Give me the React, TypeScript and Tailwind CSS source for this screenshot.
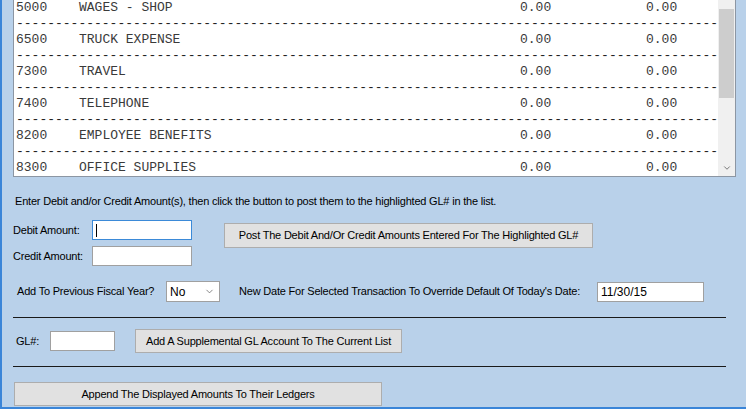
import { ChevronDown } from "lucide-react";

type GlRow = { code: string; name: string; debit: string; credit: string };

const ROWS: GlRow[] = [
  { code: "5000", name: "WAGES - SHOP", debit: "0.00", credit: "0.00" },
  { code: "6500", name: "TRUCK EXPENSE", debit: "0.00", credit: "0.00" },
  { code: "7300", name: "TRAVEL", debit: "0.00", credit: "0.00" },
  { code: "7400", name: "TELEPHONE", debit: "0.00", credit: "0.00" },
  { code: "8200", name: "EMPLOYEE BENEFITS", debit: "0.00", credit: "0.00" },
  { code: "8300", name: "OFFICE SUPPLIES", debit: "0.00", credit: "0.00" },
];

const DASHES = "-".repeat(90);

function WinButton({ children, className }: { children: React.ReactNode; className: string }) {
  return (
    <button
      type="button"
      className={
        "whitespace-nowrap border border-[#adadad] bg-[#e1e1e1] text-black leading-none " + className
      }
    >
      {children}
    </button>
  );
}

function WinInput({ value, focused, className }: { value?: string; focused?: boolean; className: string }) {
  return (
    <div
      className={
        "flex h-[20px] items-center border bg-white px-[3px] text-[12px] tracking-normal text-black " +
        (focused ? "border-[#3b8ad8] " : "border-[#a0a0a0] ") +
        className
      }
    >
      {focused ? <span className="h-[13px] w-px bg-black" /> : value}
    </div>
  );
}

export default function App() {
  return (
    <div className="h-[409px] w-[746px] overflow-hidden border-b-2 border-l-2 border-[#3a85d8] bg-[#b9d1ea] font-['Liberation_Sans',Arial,sans-serif] text-[11px] tracking-[-0.2px] text-black">
      {/* GL account list */}
      <div className="ml-[11px] flex h-[177px] w-[723px] border-x border-b border-[#8c96a3] bg-white">
        <div className="flex-1 overflow-hidden pl-[2px] font-['Liberation_Mono','Courier_New',monospace] text-[13px] leading-[16px] tracking-normal text-[#3a3a3a]">
          {ROWS.map((r, i) => (
            <div key={r.code}>
              <div className="flex whitespace-pre">
                <span className="w-[63px]">{r.code}</span>
                <span className="w-[441px]">{r.name}</span>
                <span className="w-[126px]">{r.debit}</span>
                <span>{r.credit}</span>
              </div>
              {i < ROWS.length - 1 ? <div className="whitespace-pre text-[#222]">{DASHES}</div> : null}
            </div>
          ))}
        </div>
        <div className="flex w-[17px] flex-col bg-[#f0f0f0]">
          <div className="mx-[1px] mt-[9px] h-[89px] bg-[#cdcdcd]" />
          <div className="flex-1" />
          <div className="flex h-[16px] items-center justify-center text-[#606060]">
            <ChevronDown size={10} strokeWidth={2} />
          </div>
        </div>
      </div>

      <div className="pl-[11px] pr-[18px]">
        <p className="ml-[2px] mt-[17px] h-[14px] whitespace-nowrap leading-[14px]">
          Enter Debit and/or Credit Amount(s), then click the button to post them to the highlighted GL# in the list.
        </p>

        {/* debit / credit entry */}
        <div className="mt-[12px] flex">
          <div className="flex flex-col gap-[6px]">
            <div className="flex items-center">
              <span className="w-[79px] whitespace-nowrap">Debit Amount:</span>
              <WinInput focused className="w-[100px]" />
            </div>
            <div className="flex items-center">
              <span className="w-[79px] whitespace-nowrap">Credit Amount:</span>
              <WinInput className="w-[100px]" />
            </div>
          </div>
          <WinButton className="ml-[32px] mt-[3px] h-[25px] w-[369px]">
            Post The Debit And/Or Credit Amounts Entered For The Highlighted GL#
          </WinButton>
        </div>

        {/* fiscal year + override date */}
        <div className="mt-[15px] flex items-center">
          <span className="ml-[4px] w-[149px] whitespace-nowrap">Add To Previous Fiscal Year?</span>
          <div className="flex h-[21px] w-[54px] items-center justify-between border border-[#a0a0a0] bg-white pl-[3px] pr-[4px] text-[12px] tracking-normal">
            <span>No</span>
            <ChevronDown size={11} strokeWidth={1.5} className="text-[#555]" />
          </div>
          <span className="ml-[19px] w-[358px] whitespace-nowrap">
            New Date For Selected Transaction To Override Default Of Today&apos;s Date:
          </span>
          <WinInput value="11/30/15" className="w-[107px]" />
        </div>

        <div className="mt-[15px] h-px w-[713px] bg-[#1a1a1a]" />

        {/* supplemental account */}
        <div className="mt-[11px] flex items-center">
          <span className="ml-[3px] w-[34px]">GL#:</span>
          <WinInput className="w-[65px]" />
          <WinButton className="ml-[20px] h-[24px] w-[267px]">Add A Supplemental GL Account To The Current List</WinButton>
        </div>

        <div className="mt-[13px] h-px w-[713px] bg-[#1a1a1a]" />

        <WinButton className="ml-[1px] mt-[15px] h-[24px] w-[368px]">Append The Displayed Amounts To Their Ledgers</WinButton>
      </div>
    </div>
  );
}
